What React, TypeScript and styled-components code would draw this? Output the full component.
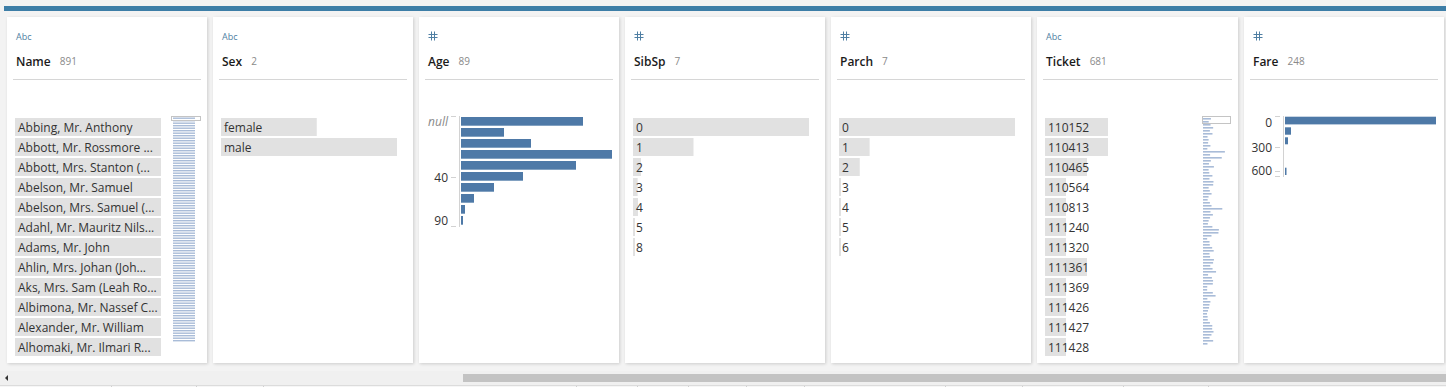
import React from 'react';
import styled, { createGlobalStyle } from 'styled-components';

const FONT = `"Open Sans", "Liberation Sans", sans-serif`;

const GlobalStyle = createGlobalStyle`
  html, body {
    margin: 0;
    padding: 0;
    background: #f3f3f3;
    font-family: ${FONT};
  }
`;

const Page = styled.div`
  width: 1446px;
  height: 387px;
  overflow: hidden;
  display: flex;
  flex-direction: column;
  background: #f3f3f3;
`;

const TopBar = styled.div`
  height: 5px;
  margin: 6px 0 0 4px;
  background: #3d7ea7;
`;

const CardRow = styled.div`
  display: flex;
  gap: 6px;
  padding: 6px 0 0 7px;
`;

const Card = styled.div`
  flex: 0 0 200px;
  height: 346px;
  box-sizing: border-box;
  padding: 0 6px;
  background: #fff;
  box-shadow: 1px 1px 3px rgba(0, 0, 0, 0.16);
  display: flex;
  flex-direction: column;
`;

const TypeTag = styled.div`
  height: 12px;
  margin-top: 13px;
  padding-left: 3px;
  display: flex;
  align-items: center;
  font-size: 9px;
  color: #4f7fa3;
`;

const TitleRow = styled.div`
  height: 16px;
  margin-top: 11px;
  padding-left: 3px;
  display: flex;
  align-items: center;
  gap: 9px;
`;

const FieldName = styled.span`
  font-size: 12px;
  font-weight: 600;
  color: #1b1b1b;
`;

const Count = styled.span`
  font-size: 10px;
  color: #8a8a8a;
`;

const Divider = styled.div`
  height: 1px;
  margin-top: 10px;
  background: #d6d6d6;
`;

const Body = styled.div`
  margin-top: 36px;
`;

const ListBody = styled.div`
  display: flex;
  gap: 10px;
  padding-left: 2px;
`;

const RowList = styled.div<{ $width: number }>`
  width: ${(p) => p.$width}px;
  padding-top: 2px;
  display: flex;
  flex-direction: column;
  gap: 2px;
`;

const Row = styled.div<{ $bar: number }>`
  height: 18px;
  box-sizing: border-box;
  padding: 1px 0 0 3px;
  line-height: 17px;
  font-size: 12px;
  color: #333;
  white-space: nowrap;
  overflow: hidden;
  text-overflow: ellipsis;
  background: linear-gradient(#e1e1e1, #e1e1e1) no-repeat;
  background-size: ${(p) => p.$bar}px 100%;
`;

const Scroller = styled.svg`
  display: block;
  flex: none;
`;

// the chart gets a few pixels of headroom so top labels are not clipped
const PAD = 4;

const Chart = styled.svg`
  display: block;
  margin-top: -${PAD}px;
`;

const ScrollTrack = styled.div`
  height: 14px;
  margin-top: 8px;
  background: #f0f0f0;
  display: flex;
  align-items: center;
`;

const Arrow = styled.div`
  width: 0;
  height: 0;
  margin-left: 5px;
  border-top: 3px solid transparent;
  border-bottom: 3px solid transparent;
  border-right: 3px solid #333;
`;

const Thumb = styled.div`
  height: 8px;
  margin-left: auto;
  width: 983px;
  background: #c3c3c3;
`;

const BottomStrip = styled.div`
  flex: 1;
  border-top: 1px solid #dcdcdc;
  display: flex;
  background: #f6f6f6;
`;

const StripCell = styled.div<{ $w: number }>`
  flex: 0 0 ${(p) => p.$w}px;
  border-right: 1px solid #d0d0d0;
`;

function HashIcon() {
  return (
    <svg width="10" height="10" viewBox="0 0 10 10">
      <g stroke="#4f7fa3" strokeWidth="1" fill="none">
        <line x1="3.5" y1="0.5" x2="3.5" y2="9.5" />
        <line x1="6.5" y1="0.5" x2="6.5" y2="9.5" />
        <line x1="0.5" y1="3.5" x2="9.5" y2="3.5" />
        <line x1="0.5" y1="6.5" x2="9.5" y2="6.5" />
      </g>
    </svg>
  );
}

type Item = { label: string; bar: number };

function NameScroller() {
  const lines = [];
  for (let y = 1.5; y < 225; y += 2.5) {
    lines.push(<rect key={y} x={2} y={y} width={22} height={1.4} fill="#a9bcd8" />);
  }
  return (
    <Scroller width="30" height="228">
      {lines}
      <rect x="0.5" y="0.5" width="29" height="4" fill="none" stroke="#c4c4c4" />
    </Scroller>
  );
}

function TicketScroller() {
  let seed = 7;
  const rnd = () => {
    seed = (seed * 9301 + 49297) % 233280;
    return seed / 233280;
  };
  const lines = [];
  for (let y = 2; y < 228; y += 3) {
    const r = rnd();
    const w = r > 0.93 ? 18 + rnd() * 4 : r > 0.8 ? 12 + rnd() * 4 : 4 + rnd() * 7;
    lines.push(<rect key={y} x={1} y={y} width={w} height={1.6} fill="#a9bcd8" />);
  }
  return (
    <Scroller width="30" height="230">
      {lines}
      <rect x="0.5" y="0.5" width="28" height="7" fill="none" stroke="#c4c4c4" />
    </Scroller>
  );
}

function ListChart({ items, width, scroller }: { items: Item[]; width: number; scroller?: React.ReactNode }) {
  return (
    <ListBody>
      <RowList $width={width}>
        {items.map((it) => (
          <Row key={it.label} $bar={it.bar}>
            {it.label}
          </Row>
        ))}
      </RowList>
      {scroller}
    </ListBody>
  );
}

type Hist = {
  labels: { text: string; y: number; italic?: boolean }[];
  ticks: number[];
  axisX: number;
  axisBottom: number;
  labelX: number;
  bars: { y: number; h: number; w: number }[];
  height: number;
};

function Histogram({ h }: { h: Hist }) {
  return (
    <Chart width="188" height={h.height + PAD}>
      <g transform={`translate(0 ${PAD})`}>
        <line x1={h.axisX + 0.5} y1={0} x2={h.axisX + 0.5} y2={h.axisBottom} stroke="#d2d2d2" />
        {h.ticks.map((t) => (
          <line key={t} x1={h.axisX - 8} y1={t + 0.5} x2={h.axisX - 3} y2={t + 0.5} stroke="#d2d2d2" />
        ))}
        {h.labels.map((l) => (
          <text
            key={l.text}
            x={h.labelX}
            y={l.y}
            textAnchor="end"
            fontFamily={FONT}
            fontSize="12"
            fontStyle={l.italic ? 'italic' : 'normal'}
            fill={l.italic ? '#8a8a8a' : '#333'}
          >
            {l.text}
          </text>
        ))}
        {h.bars.map((b, i) => (
          <rect key={i} x={h.axisX + 2} y={b.y} width={b.w} height={b.h} fill="#4e79a7" />
        ))}
      </g>
    </Chart>
  );
}

const names = [
  'Abbing, Mr. Anthony',
  'Abbott, Mr. Rossmore ...',
  'Abbott, Mrs. Stanton (...',
  'Abelson, Mr. Samuel',
  'Abelson, Mrs. Samuel (...',
  'Adahl, Mr. Mauritz Nils...',
  'Adams, Mr. John',
  'Ahlin, Mrs. Johan (Joh...',
  'Aks, Mrs. Sam (Leah Ro...',
  'Albimona, Mr. Nassef C...',
  'Alexander, Mr. William',
  'Alhomaki, Mr. Ilmari R...',
].map((label) => ({ label, bar: 146 }));

const scaled = (rows: [string, number][], max: number, width: number): Item[] =>
  rows.map(([label, n]) => ({ label, bar: Math.max(2, (n / max) * width) }));

const sex = scaled([['female', 314], ['male', 577]], 577, 176);
const sibsp = scaled(
  [['0', 608], ['1', 209], ['2', 28], ['3', 16], ['4', 18], ['5', 5], ['8', 7]],
  608,
  176
);
const parch = scaled(
  [['0', 678], ['1', 118], ['2', 80], ['3', 5], ['4', 4], ['5', 5], ['6', 1]],
  678,
  176
);
const tickets = (
  [
    ['110152', 3], ['110413', 3], ['110465', 2], ['110564', 1], ['110813', 1], ['111240', 1],
    ['111320', 1], ['111361', 2], ['111369', 1], ['111426', 1], ['111427', 1], ['111428', 1],
  ] as [string, number][]
).map(([label, n]) => ({ label, bar: n * 21 }));

const ageWidths = [122, 43, 70, 151, 115, 62, 33, 13, 4, 2];
const age: Hist = {
  labels: [
    { text: 'null', y: 10, italic: true },
    { text: '40', y: 66 },
    { text: '90', y: 109 },
  ],
  ticks: [0, 61, 110],
  axisX: 34,
  axisBottom: 111,
  labelX: 23,
  bars: ageWidths.map((w, i) => ({ y: 1 + i * 11, h: 8.7, w })),
  height: 115,
};

const fare: Hist = {
  labels: [
    { text: '0', y: 11 },
    { text: '300', y: 36 },
    { text: '600', y: 59 },
  ],
  ticks: [0, 31, 55, 60],
  axisX: 33,
  axisBottom: 61,
  labelX: 22,
  bars: [
    { y: 0.7, h: 7.7, w: 151 },
    { y: 11.3, h: 7.4, w: 6 },
    { y: 21.3, h: 7, w: 3 },
    { y: 51.7, h: 7.3, w: 1.5 },
  ],
  height: 65,
};

type Col = { type: 'abc' | 'num'; name: string; count: number; body: React.ReactNode };

const columns: Col[] = [
  { type: 'abc', name: 'Name', count: 891, body: <ListChart items={names} width={146} scroller={<NameScroller />} /> },
  { type: 'abc', name: 'Sex', count: 2, body: <ListChart items={sex} width={176} /> },
  { type: 'num', name: 'Age', count: 89, body: <Histogram h={age} /> },
  { type: 'num', name: 'SibSp', count: 7, body: <ListChart items={sibsp} width={176} /> },
  { type: 'num', name: 'Parch', count: 7, body: <ListChart items={parch} width={176} /> },
  { type: 'abc', name: 'Ticket', count: 681, body: <ListChart items={tickets} width={147} scroller={<TicketScroller />} /> },
  { type: 'num', name: 'Fare', count: 248, body: <Histogram h={fare} /> },
];

const strip = [111, 84, 66, 312, 60, 50, 57, 57, 140, 76, 100, 84];

export default function App() {
  return (
    <>
      <GlobalStyle />
      <Page>
        <TopBar />
        <CardRow>
          {columns.map((c) => (
            <Card key={c.name}>
              <TypeTag>{c.type === 'abc' ? 'Abc' : <HashIcon />}</TypeTag>
              <TitleRow>
                <FieldName>{c.name}</FieldName>
                <Count>{c.count}</Count>
              </TitleRow>
              <Divider />
              <Body>{c.body}</Body>
            </Card>
          ))}
        </CardRow>
        <ScrollTrack>
          <Arrow />
          <Thumb />
        </ScrollTrack>
        <BottomStrip>
          {strip.map((w, i) => (
            <StripCell key={i} $w={w} />
          ))}
        </BottomStrip>
      </Page>
    </>
  );
}
